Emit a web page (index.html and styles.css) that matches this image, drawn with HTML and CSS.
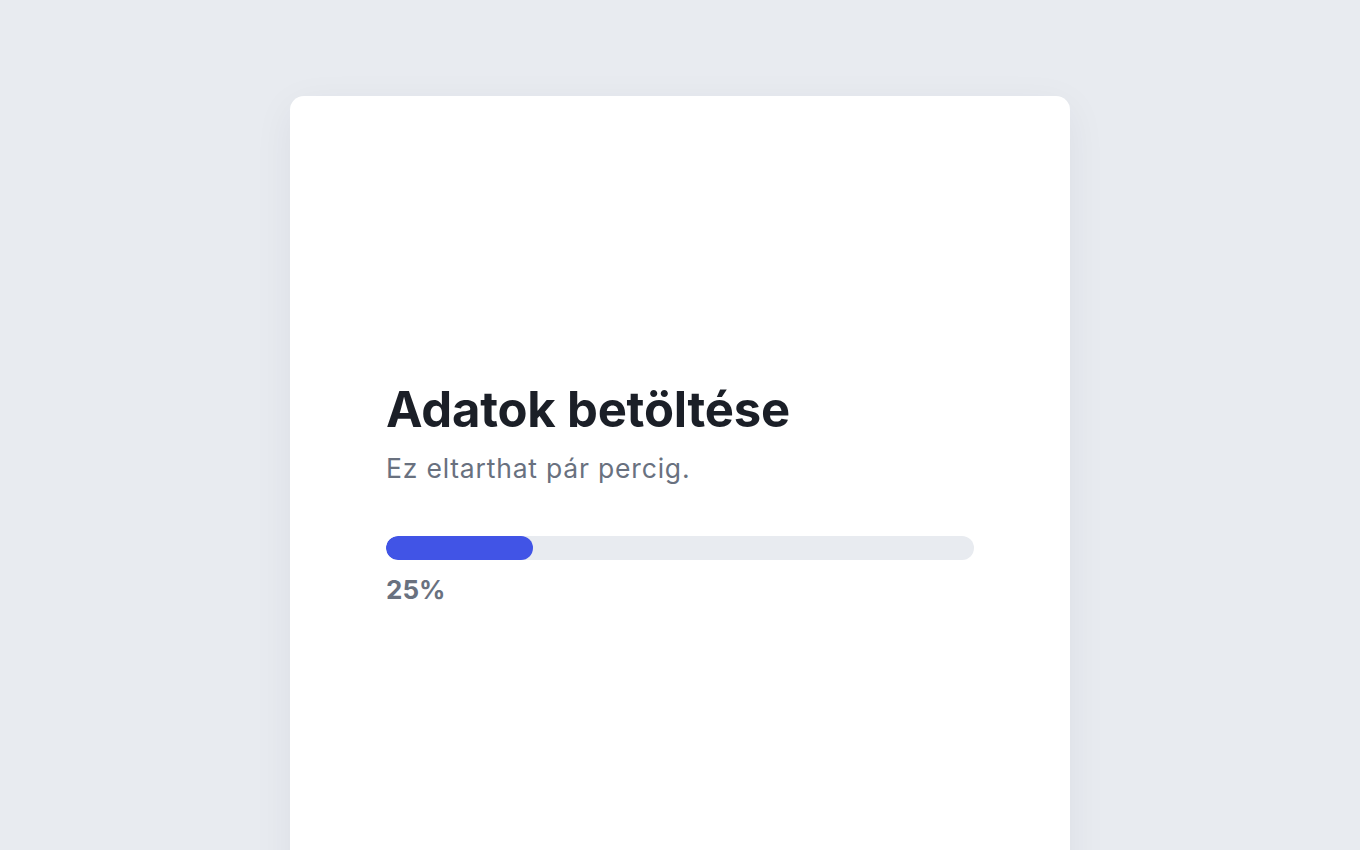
FILE: index.html
```html
<!DOCTYPE html>
<html lang="hu">
<head>
  <meta charset="UTF-8">
  <meta name="viewport" content="width=device-width, initial-scale=1.0">
  <title>Betöltés</title>
  <link rel="stylesheet" href="styles.css">
</head>
<body>
  <div class="card">
    <h1 class="title">Adatok betöltése</h1>
    <p class="subtitle">Ez eltarthat pár percig.</p>
    <div class="progress">
      <div class="progress-fill" style="width: 25%"></div>
    </div>
    <div class="percent">25%</div>
  </div>
</body>
</html>
```

FILE: styles.css
```css
html, body {
  margin: 0;
  height: 100%;
  overflow: hidden;
}
body {
  font-family: Inter, "Noto Sans", sans-serif;
  background-color: #e8ebf0;
  padding-top: 96px;
  box-sizing: border-box;
}
.card {
  width: 780px;
  min-height: 900px;
  margin: 0 auto;
  background-color: #fff;
  border-radius: 14px;
  box-shadow: 0 10px 40px rgba(30, 40, 60, 0.06);
  box-sizing: border-box;
  padding: 284px 96px 96px;
}
.title {
  margin: 0;
  font-size: 49px;
  font-weight: 700;
  line-height: 60px;
  color: #1b1f27;
  letter-spacing: -0.2px;
}
.subtitle {
  margin: 10px 0 0;
  font-size: 26.5px;
  line-height: 36px;
  letter-spacing: 0.8px;
  color: #69717f;
}
.progress {
  margin-top: 50px;
  height: 24px;
  background-color: #e8ebf0;
  border-radius: 12px;
  overflow: hidden;
}
.progress-fill {
  height: 100%;
  background-color: #4154e6;
  border-radius: 12px;
}
.percent {
  margin-top: 12px;
  font-size: 26px;
  font-weight: 700;
  line-height: 36px;
  color: #69717f;
}
```
